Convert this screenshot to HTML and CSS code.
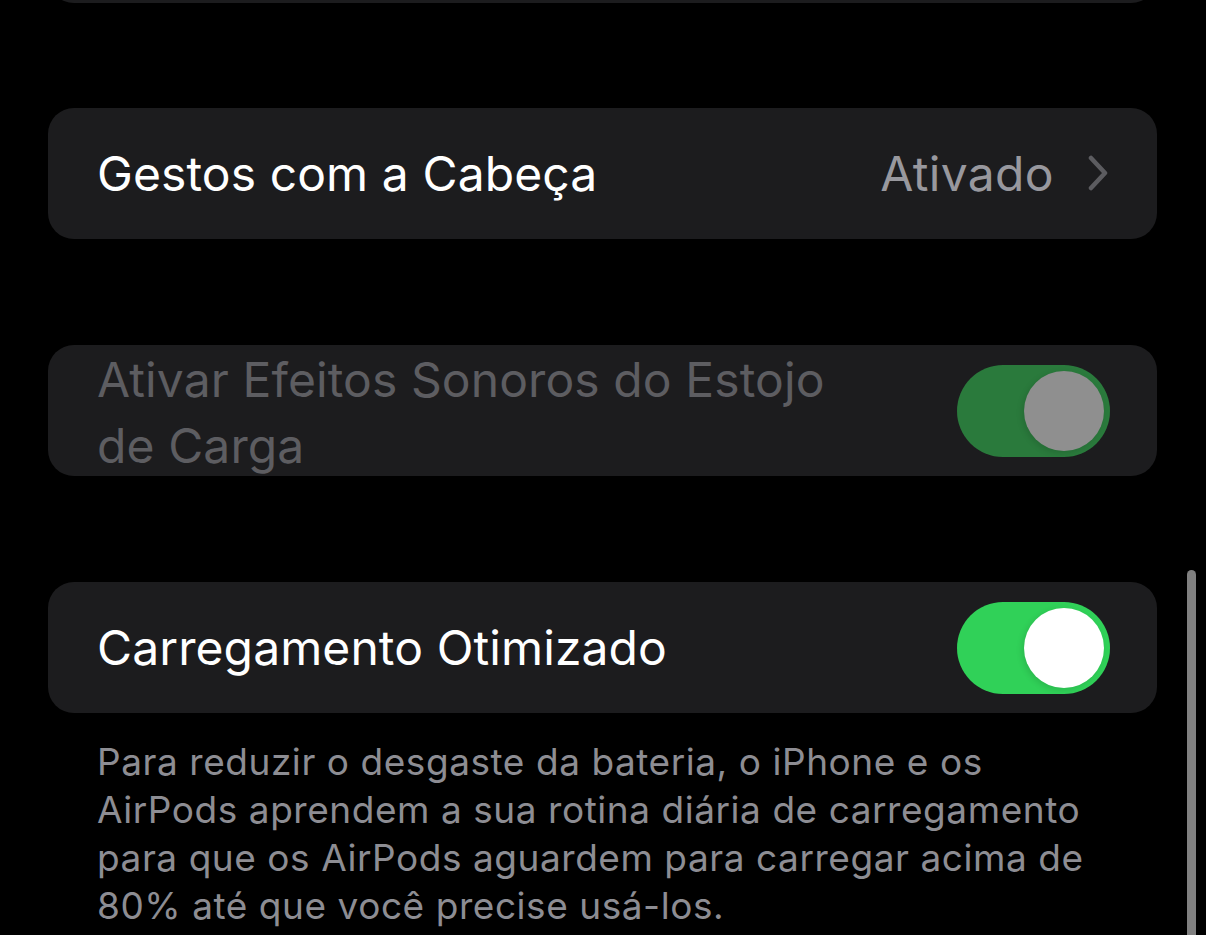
FILE: index.html
```html
<!DOCTYPE html>
<html>
<head>
    <title>Ajustes AirPods</title>
    <link rel="stylesheet" href="styles.css">
</head>
<body>
    <div class="settings">
        <div class="group group-top"></div>

        <div class="group">
            <div class="row">
                <span class="row-label">Gestos com a Cabeça</span>
                <span class="row-value">
                    Ativado
                    <svg class="chevron" width="20" height="36" viewBox="0 0 20 36">
                        <path d="M3 3 L17 18 L3 33" fill="none" stroke="#5c5c60" stroke-width="4.5" stroke-linecap="round" stroke-linejoin="round"/>
                    </svg>
                </span>
            </div>
        </div>

        <div class="group">
            <div class="row disabled">
                <span class="row-label">Ativar Efeitos Sonoros do Estojo de Carga</span>
                <div class="switch on dim"><div class="knob"></div></div>
            </div>
        </div>

        <div class="group">
            <div class="row">
                <span class="row-label">Carregamento Otimizado</span>
                <div class="switch on"><div class="knob"></div></div>
            </div>
        </div>
        <p class="footer">Para reduzir o desgaste da bateria, o iPhone e os AirPods aprendem a sua rotina diária de carregamento para que os AirPods aguardem para carregar acima de 80% até que você precise usá-los.</p>
    </div>

    <div class="scrollbar"></div>
</body>
</html>
```

FILE: styles.css
```css
body {
    background: #000;
    margin: 0;
    font-family: Inter, "Noto Sans", sans-serif;
    color: #fff;
    overflow: hidden;
    height: 935px;
}

.settings {
    padding: 0 49px 0 48px;
}

.group {
    background: #1c1c1e;
    border-radius: 26px;
    margin-bottom: 106px;
}

.group-top {
    height: 131px;
    margin-top: -128px;
    margin-bottom: 105px;
}

.row {
    height: 131px;
    display: flex;
    align-items: center;
    justify-content: space-between;
    padding: 0 47px 0 49px;
    box-sizing: border-box;
    overflow: hidden;
}

.row-label {
    font-size: 48px;
    letter-spacing: 0.1px;
    line-height: 66px;
    max-width: 780px;
}

.disabled .row-label {
    color: #5d5d61;
    margin-top: 4px;
}

.row-value {
    display: flex;
    align-items: center;
    gap: 34px;
    font-size: 48px;
    letter-spacing: 0.35px;
    color: #98989e;
    padding-right: 2px;
}

.chevron {
    display: block;
    margin-top: -2px;
}

.switch {
    width: 153px;
    height: 92px;
    border-radius: 46px;
    background: #3a3a3c;
    padding: 6px;
    box-sizing: border-box;
    display: flex;
    flex-shrink: 0;
}

.switch.on {
    background: #30d158;
    justify-content: flex-end;
}

.switch.dim {
    background: #2a7a3c;
}

.knob {
    width: 80px;
    height: 80px;
    border-radius: 50%;
    background: #fff;
    box-shadow: -2px 2px 6px rgba(0, 0, 0, 0.12);
}

.dim .knob {
    background: #8f8f8f;
}

.footer {
    margin: -81px 0 0;
    padding: 0 30px 0 49px;
    font-size: 37px;
    line-height: 48px;
    color: #8d8d93;
    letter-spacing: 0.55px;
}

.scrollbar {
    position: fixed;
    left: 1187px;
    top: 570px;
    width: 9px;
    height: 380px;
    border-radius: 5px;
    background: #808080;
}
```
